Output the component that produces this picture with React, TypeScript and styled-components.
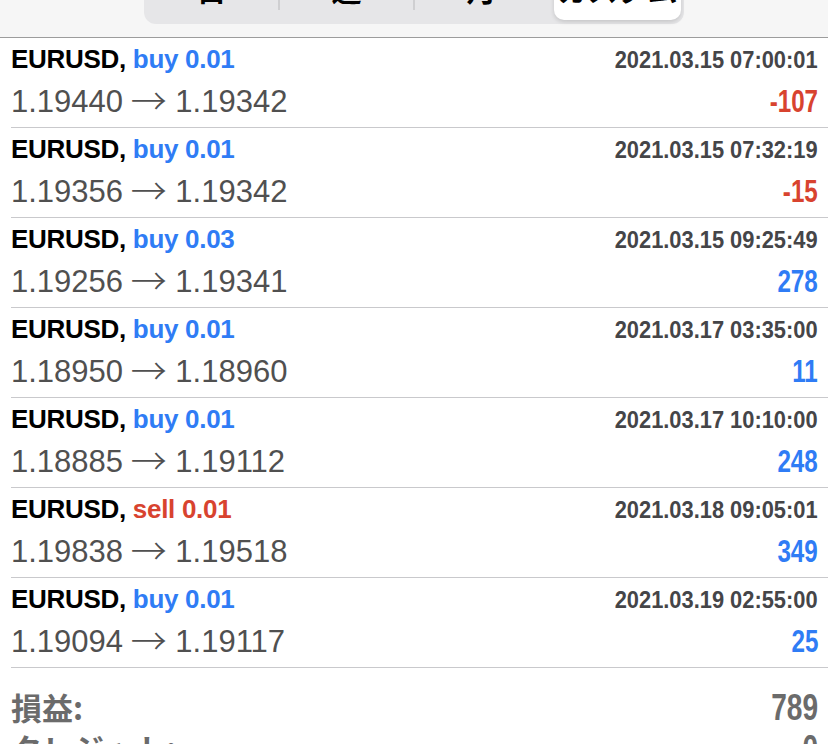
import React from 'react';
import styled, { createGlobalStyle } from 'styled-components';

const GlobalStyle = createGlobalStyle`
  html, body {
    margin: 0;
    padding: 0;
    background: #ffffff;
  }
  body {
    font-family: "Liberation Sans", Arial, sans-serif;
    overflow: hidden;
  }
`;

const Page = styled.div`
  width: 828px;
  height: 744px;
  overflow: hidden;
  background: #fff;
`;

const Header = styled.div`
  height: 24px;
  padding-bottom: 13px;
  background: #f6f6f6;
  border-bottom: 1px solid #9c9c9c;
  display: flex;
  justify-content: center;
  align-items: flex-end;
  overflow: hidden;
`;

const Segmented = styled.div`
  width: 540px;
  height: 64px;
  flex: none;
  display: grid;
  grid-template-columns: repeat(4, 1fr);
  background: #e6e6e8;
  border-radius: 12px;
`;

const Segment = styled.div<{ $active?: boolean; $divider?: boolean }>`
  display: flex;
  align-items: center;
  justify-content: center;
  padding-bottom: 9px;
  font-family: "Noto Sans CJK JP", sans-serif;
  font-weight: 700;
  font-size: 30px;
  line-height: 36px;
  color: #000;
  position: relative;

  ${({ $active }) =>
    $active &&
    `
    background: #ffffff;
    border-radius: 10px;
    margin: 3px 3px 4px 5px;
    box-shadow: 0 2px 4px rgba(0, 0, 0, 0.14);
    padding-bottom: 7px;
  `}

  ${({ $divider }) =>
    $divider &&
    `
    &::after {
      content: '';
      position: absolute;
      right: -1px;
      top: 14px;
      bottom: 14px;
      width: 2px;
      background: #cfcfd1;
    }
  `}
`;

const List = styled.div`
  display: flex;
  flex-direction: column;
`;

const Row = styled.div`
  margin-left: 11px;
  padding: 6px 10px 0 0;
  height: 90px;
  box-sizing: border-box;
  border-bottom: 1px solid #c9c9cc;
  display: flex;
  flex-direction: column;
  gap: 10px;
`;

const Line = styled.div`
  display: flex;
  justify-content: space-between;
  align-items: baseline;
`;

const Title = styled.div`
  font-family: "Liberation Sans", Arial, sans-serif;
  font-weight: 700;
  font-size: 26px;
  line-height: 30px;
  letter-spacing: -0.3px;
  color: #000;
`;

const Side = styled.span<{ $sell?: boolean }>`
  color: ${({ $sell }) => ($sell ? '#d8432f' : '#2f7cf5')};
`;

const DateText = styled.div`
  font-family: "Liberation Sans", Arial, sans-serif;
  font-weight: 700;
  font-size: 23px;
  line-height: 30px;
  color: #454548;
  transform: scaleX(0.95);
  transform-origin: right center;
`;

const Prices = styled.div`
  font-family: "Liberation Sans", Arial, sans-serif;
  font-size: 31px;
  line-height: 34px;
  color: #505050;
`;

const Arrow = styled.span`
  font-family: "Noto Sans CJK JP", sans-serif;
  font-weight: 300;
  font-size: 36px;
  line-height: 0;
  vertical-align: -3px;
  margin: 0 0 0 -1px;
`;

/* condensed bold figures: no narrow face is installed, so squeeze Liberation Sans */
const Narrow = styled.div<{ $color: string; $size: number }>`
  display: inline-block;
  font-family: "Liberation Sans", Arial, sans-serif;
  font-weight: 700;
  font-size: ${({ $size }) => $size}px;
  line-height: 34px;
  color: ${({ $color }) => $color};
  transform: scaleX(0.78);
  transform-origin: right center;
`;

const Summary = styled.div`
  margin-left: 11px;
  padding: 22px 10px 0 0;
  display: flex;
  flex-direction: column;
  gap: 6px;
`;

const SummaryLine = styled.div`
  display: flex;
  justify-content: space-between;
  align-items: baseline;
`;

const SummaryLabel = styled.div`
  font-family: "Noto Sans CJK JP", sans-serif;
  font-weight: 700;
  font-size: 31px;
  line-height: 34px;
  color: #6b6b6b;
`;

type Deal = {
  side: 'buy' | 'sell';
  lots: string;
  date: string;
  open: string;
  close: string;
  profit: number;
};

const deals: Deal[] = [
  { side: 'buy', lots: '0.01', date: '2021.03.15 07:00:01', open: '1.19440', close: '1.19342', profit: -107 },
  { side: 'buy', lots: '0.01', date: '2021.03.15 07:32:19', open: '1.19356', close: '1.19342', profit: -15 },
  { side: 'buy', lots: '0.03', date: '2021.03.15 09:25:49', open: '1.19256', close: '1.19341', profit: 278 },
  { side: 'buy', lots: '0.01', date: '2021.03.17 03:35:00', open: '1.18950', close: '1.18960', profit: 11 },
  { side: 'buy', lots: '0.01', date: '2021.03.17 10:10:00', open: '1.18885', close: '1.19112', profit: 248 },
  { side: 'sell', lots: '0.01', date: '2021.03.18 09:05:01', open: '1.19838', close: '1.19518', profit: 349 },
  { side: 'buy', lots: '0.01', date: '2021.03.19 02:55:00', open: '1.19094', close: '1.19117', profit: 25 },
];

const tabs = ['日', '週', '月', 'カスタム'];

export default function App() {
  return (
    <Page>
      <GlobalStyle />
      <Header>
        <Segmented>
          {tabs.map((t, i) => (
            <Segment key={t} $active={i === 3} $divider={i < 2}>
              {t}
            </Segment>
          ))}
        </Segmented>
      </Header>
      <List>
        {deals.map((d, i) => (
          <Row key={i}>
            <Line>
              <Title>
                EURUSD, <Side $sell={d.side === 'sell'}>{d.side} {d.lots}</Side>
              </Title>
              <DateText>{d.date}</DateText>
            </Line>
            <Line>
              <Prices>
                {d.open} <Arrow>→</Arrow> {d.close}
              </Prices>
              <Narrow $size={31} $color={d.profit < 0 ? '#d8432f' : '#2f7cf5'}>
                {d.profit}
              </Narrow>
            </Line>
          </Row>
        ))}
      </List>
      <Summary>
        <SummaryLine>
          <SummaryLabel>損益:</SummaryLabel>
          <Narrow $size={36} $color="#6b6b6b">789</Narrow>
        </SummaryLine>
        <SummaryLine>
          <SummaryLabel>クレジット:</SummaryLabel>
          <Narrow $size={36} $color="#6b6b6b">0</Narrow>
        </SummaryLine>
      </Summary>
    </Page>
  );
}
